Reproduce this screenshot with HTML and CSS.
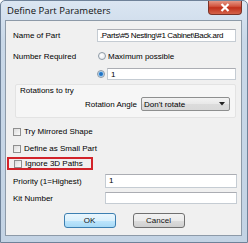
FILE: index.html
```html
<!DOCTYPE html>
<html lang="en">
<head>
  <meta charset="UTF-8">
  <title>Define Part Parameters</title>
  <link rel="stylesheet" href="styles.css">
</head>
<body>
  <div class="window">
    <!-- Title Bar -->
    <div class="titlebar">
      <span class="title">Define Part Parameters</span>
      <span class="close">
        <svg width="10" height="9" viewBox="0 0 10 9"><path d="M1.5 1 L8.5 8 M8.5 1 L1.5 8" stroke="#fff" stroke-width="2.2"/></svg>
      </span>
    </div>

    <!-- Client Area -->
    <div class="client">
      <div class="row row-name">
        <label class="lbl">Name of Part</label>
        <div class="field field-name">.Parts\#5 Nesting\#1 Cabinet\Back.ard</div>
      </div>

      <div class="row row-number">
        <label class="lbl">Number Required</label>
        <span class="radio"></span>
        <span class="opt">Maximum possible</span>
      </div>

      <div class="row row-count">
        <span class="radio checked"></span>
        <div class="field field-count">1</div>
      </div>

      <div class="group">
        <div class="group-title">Rotations to try</div>
        <div class="group-row">
          <span class="opt">Rotation Angle</span>
          <div class="select">
            <span>Don't rotate</span>
            <svg width="6" height="4" viewBox="0 0 6 4"><path d="M0 0 H6 L3 3.5 Z" fill="#222"/></svg>
          </div>
        </div>
      </div>

      <div class="checks">
        <div class="check-row"><span class="box"></span>Try Mirrored Shape</div>
        <div class="check-row"><span class="box"></span>Define as Small Part</div>
        <div class="check-row highlight"><span class="box"></span>Ignore 3D Paths</div>
      </div>

      <div class="row row-priority">
        <label class="lbl">Priority (1=Highest)</label>
        <div class="field field-wide">1</div>
      </div>
      <div class="row row-kit">
        <label class="lbl">Kit Number</label>
        <div class="field field-wide"></div>
      </div>

      <div class="buttons">
        <button class="btn btn-default">OK</button>
        <button class="btn">Cancel</button>
      </div>
    </div>
  </div>
</body>
</html>
```
FILE: styles.css
```css
/* Global */
body {
  margin: 0;
  font-family: 'Liberation Sans', Arial, sans-serif;
  font-size: 8px;
  color: #000;
}

/* Window frame */
.window {
  width: 248px;
  height: 243px;
  box-sizing: border-box;
  background: linear-gradient(to bottom, #dbe6f2 0, #c9d8e8 40px, #c3d3e4 100%);
  border: 1px solid #6f8299;
  border-radius: 5px 5px 0 0;
  overflow: hidden;
}
.titlebar {
  height: 19px;
  display: flex;
  align-items: flex-start;
}
.title {
  font-family: 'Open Sans', 'Liberation Sans', sans-serif;
  font-size: 9.5px;
  color: #111;
  margin: 3px 0 0 6px;
}
.close {
  margin-left: auto;
  margin-right: 5px;
  width: 34px;
  height: 15px;
  margin-top: -1px;
  display: flex;
  align-items: center;
  justify-content: center;
  background: linear-gradient(to bottom, #e8a493 0, #d2553f 45%, #c0301b 55%, #d4634a 100%);
  border: 1px solid #7a3328;
  border-top: none;
  border-radius: 0 0 4px 4px;
  box-sizing: border-box;
}

/* Client area */
.client {
  margin: 0 5px 0 4px;
  height: 216px;
  box-sizing: border-box;
  background: #f0f0f0;
  border: 1px solid #8d9aa8;
  padding: 0 5px 0 7px;
  display: flex;
  flex-direction: column;
}

.row {
  display: flex;
  align-items: center;
}
.lbl { width: 85px; flex: none; }
.field {
  height: 13px;
  box-sizing: border-box;
  background: #fff;
  border: 1px solid #c5ccd3;
  border-top-color: #abadb3;
  padding: 0 3px;
  line-height: 11px;
  white-space: nowrap;
  overflow: hidden;
}
.row-name { margin-top: 8px; }
.field-name { flex: 1; padding-left: 2px; margin-left: -1px; letter-spacing: -0.35px; }
.row-number { margin-top: 8px; height: 12px; }
.row-count { margin-top: 6px; padding-left: 84px; }
.field-count { flex: 1; margin-left: 2px; height: 12px; }
.opt { margin-left: 2px; }

/* Radio buttons */
.radio {
  width: 8px;
  height: 8px;
  flex: none;
  border-radius: 50%;
  box-sizing: border-box;
  border: 1px solid #8e9aa6;
  background: radial-gradient(circle at 40% 40%, #fff 0, #dfe3e8 100%);
}
.radio.checked {
  background: radial-gradient(circle, #1d5fa8 0, #2f86d6 1.6px, #b8d5ee 2.6px, #eef3f8 100%);
}

/* Rotations group */
.group {
  margin: 4px 0 0 2px;
  height: 34px;
  box-sizing: border-box;
  border: 1px solid #e3e3e3;
  border-radius: 2px;
  background: #f6f6f6;
  padding: 1px 5px 0 4px;
}
.group-title { line-height: 10px; }
.group-row {
  display: flex;
  align-items: center;
  justify-content: flex-end;
  margin-top: 1px;
}
.select {
  width: 89px;
  height: 14px;
  box-sizing: border-box;
  margin-left: 4px;
  border: 1px solid #8e8f8f;
  border-radius: 2px;
  background: linear-gradient(to bottom, #f3f3f3 0, #e8e8e8 50%, #dcdcdc 51%, #d9d9d9 100%);
  display: flex;
  align-items: center;
  justify-content: space-between;
  padding: 0 4px 0 2px;
}

/* Checkboxes */
.checks {
  margin-top: 5px;
  display: flex;
  flex-direction: column;
}
.check-row {
  height: 17px;
  display: flex;
  align-items: center;
  margin-left: -1px;
}
.box {
  width: 8px;
  height: 8px;
  box-sizing: border-box;
  border: 1px solid #8f8f8f;
  background: linear-gradient(135deg, #dcdcdc, #fbfbfb);
  margin-right: 3px;
  margin-left: 1px;
}
.check-row.highlight {
  margin-left: -6px;
  padding-left: 4px;
  width: 78px;
  height: 9px;
  border: 2px solid #d2232a;
}

/* Priority / Kit */
.row-priority { margin-top: 4px; }
.row-priority .lbl, .row-kit .lbl { width: 92px; }
.field-wide { flex: 1; height: 14px; margin-right: -1px; }
.row-kit { margin-top: 4px; }
.row-kit .field-wide { height: 12px; }

/* Buttons */
.buttons {
  margin-top: 9px;
  display: flex;
  justify-content: center;
  gap: 17px;
  padding-right: 1px;
}
.btn {
  width: 52px;
  height: 15px;
  padding: 0;
  font-family: inherit;
  font-size: 8px;
  color: #111;
  border: 1px solid #707070;
  border-radius: 3px;
  background: linear-gradient(to bottom, #f2f2f2 0, #ebebeb 50%, #dddddd 51%, #cfcfcf 100%);
}
.btn-default {
  border-color: #3c7fb1;
  background: linear-gradient(to bottom, #eaf6fd 0, #d9f0fc 50%, #bee6fd 51%, #a7d9f5 100%);
}
```
